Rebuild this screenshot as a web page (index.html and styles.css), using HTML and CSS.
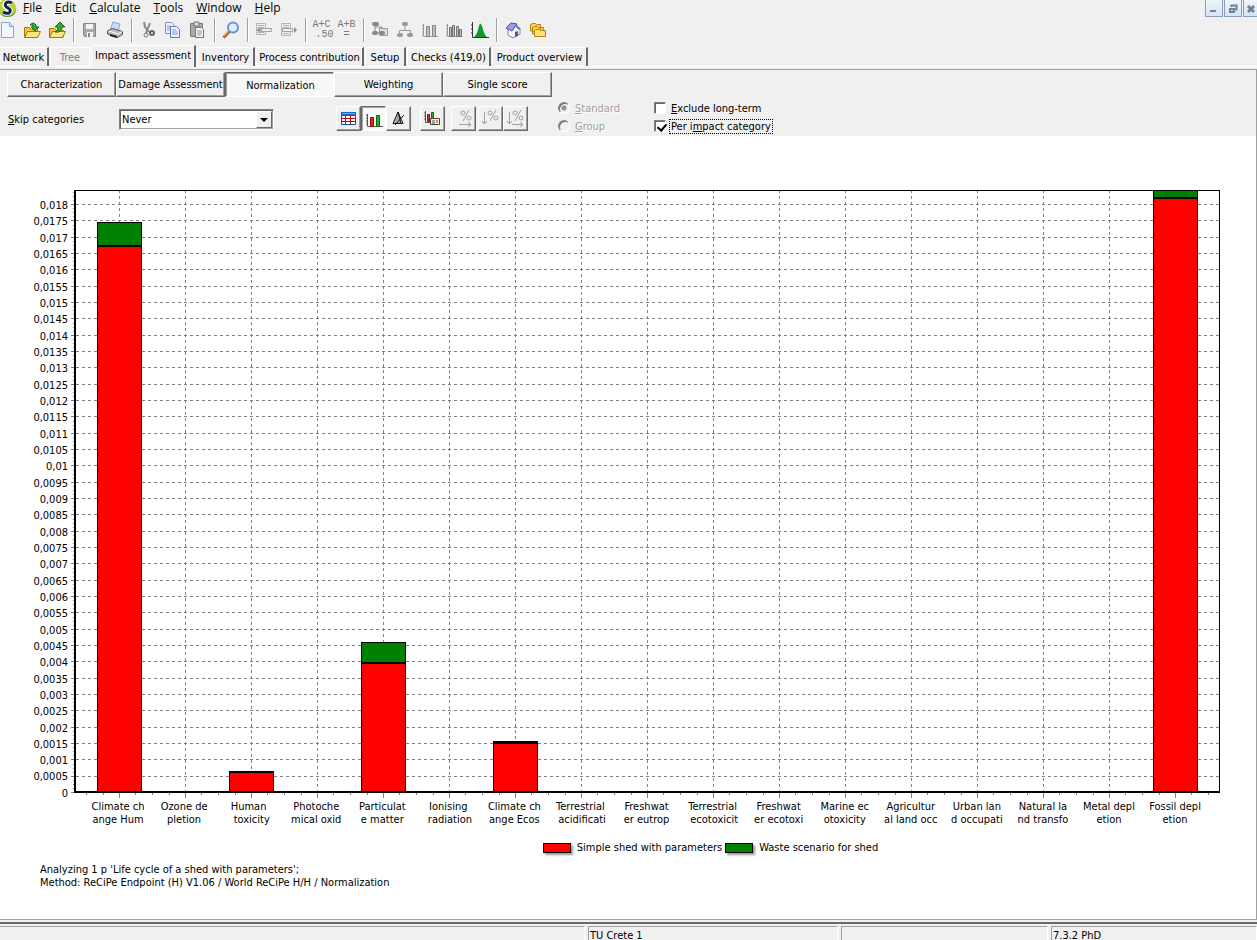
FILE: index.html
```html
<!DOCTYPE html>
<html lang="en">
<head>
  <meta charset="UTF-8">
  <meta name="viewport" content="width=device-width, initial-scale=1.0">
  <title>Impact assessment</title>
  <link rel="stylesheet" href="styles.css">
</head>
<body>
  <header class="menu-bar">
    <svg class="logo" width="17" height="17" viewBox="0 0 17 17">
      <circle cx="7" cy="8" r="9" fill="#b7d433"/>
      <path d="M0 13Q5 17 13 14Q16 11 16 7Q17 17 7 17Q2 17 0 13Z" fill="#5da52c"/>
      <path d="M12 3Q8 1 6 3Q3 6 7 8Q12 10 9 13Q6 14 3 12" fill="none" stroke="#fff" stroke-width="5"/>
      <path d="M12 3Q8 1 6 3Q4 6 8 8Q12 10 9 13Q6 14 3 12" fill="none" stroke="#14234f" stroke-width="3"/>
    </svg>
    <nav class="menu">
      <a href="#"><u>F</u>ile</a>
      <a href="#"><u>E</u>dit</a>
      <a href="#"><u>C</u>alculate</a>
      <a href="#"><u>T</u>ools</a>
      <a href="#"><u>W</u>indow</a>
      <a href="#"><u>H</u>elp</a>
    </nav>
    <div class="window-buttons">
      <button aria-label="Minimize"><svg width="16" height="15"><path d="M4 9h6v2H4z" fill="#71839b"/></svg></button>
      <button aria-label="Restore"><svg width="16" height="15"><path d="M6.5 6V4.5h5v4H10" fill="none" stroke="#71839b" stroke-width="2"/><path d="M5 8h4v3H5z" fill="none" stroke="#71839b" stroke-width="2"/></svg></button>
      <button aria-label="Close"><svg width="16" height="15"><path d="M4 5l6 6M10 5l-6 6" fill="none" stroke="#71839b" stroke-width="3"/></svg></button>
    </div>
  </header>

  <div class="toolbar">
    <div class="tool-group first">
      <button aria-label="New"><svg width="18" height="18"><path d="M3.5 1.5h8l4 4v11h-12z" fill="#f2f6ff" stroke="#8fa3cf"/><path d="M11.5 1.5v4h4" fill="#cddcf8" stroke="#8fa3cf"/></svg></button>
      <button aria-label="Open"><svg width="18" height="18"><path d="M1.5 16V6.5h5l2 2h6V16z" fill="#f3c53a" stroke="#a87608"/><path d="M1.5 16.5l3-6h13l-3 6z" fill="#ffe680" stroke="#a87608"/><path d="M7 4Q10 0 13 4V6h3l-4 4-4-4h2Q10 3 7 4z" fill="#36a832" stroke="#157019"/></svg></button>
      <button aria-label="Save project"><svg width="18" height="18"><path d="M1.5 16V7.5h5l2 2h7V16z" fill="#f3c53a" stroke="#a87608"/><path d="M1.5 16.5l3-6h13l-3 6z" fill="#ffe680" stroke="#a87608"/><path d="M7 11Q10 10 10 6H7l5-5 5 5h-3Q14 12 7 11z" fill="#36a832" stroke="#157019"/></svg></button>
    </div>
    <div class="tool-group">
      <button aria-label="Save"><svg width="18" height="18"><path d="M2.5 2.5h12v13h-11l-1-1z" fill="#aaa" stroke="#888"/><path d="M5 3h7v5H5zM6 11h6v5H6z" fill="#f4f4f4"/><path d="M7 12h2v4H7z" fill="#888"/></svg></button>
      <button aria-label="Print"><svg width="18" height="18"><path d="M4 9L7 1l7 2-2 7z" fill="#c9ddfa" stroke="#8aa0cc"/><path d="M1.5 10l5-2.5 10 3v3l-5 3-10-3.5z" fill="#bbb" stroke="#555"/><path d="M3 10l9 3 4-2.5" fill="none" stroke="#fff"/><path d="M4 14l7 2" stroke="#222" stroke-width="2"/></svg></button>
    </div>
    <div class="tool-group">
      <button aria-label="Cut"><svg width="18" height="18"><path d="M5 1l1 5 4 5M11 2l-2 5-2 5" fill="none" stroke="#888" stroke-width="2"/><circle cx="7" cy="14" r="2" fill="none" stroke="#777"/><circle cx="13" cy="12" r="2" fill="none" stroke="#666" stroke-width="2"/></svg></button>
      <button aria-label="Copy"><svg width="18" height="18"><path d="M1.5 1.5h6l3 3v8h-9z" fill="#eef3ff" stroke="#7d8fc9"/><path d="M6.5 5.5h6l3 3v8h-9z" fill="#eef3ff" stroke="#6376b8"/><path d="M3 5h4M3 7h3M3 9h3M8 9h4M8 11h6M8 13h6" stroke="#8296cf"/></svg></button>
      <button aria-label="Paste"><svg width="18" height="18"><path d="M1.5 2.5h12v13h-12z" fill="#aaa" stroke="#777"/><path d="M5 1h5v4H5z" fill="#ddd" stroke="#777"/><path d="M6.5 6.5h6l2 2v8h-8z" fill="#f4f4f4" stroke="#777"/><path d="M8 10h5M8 12h5M8 14h4" stroke="#999"/></svg></button>
    </div>
    <div class="tool-group">
      <button aria-label="Find"><svg width="18" height="18"><path d="M1.5 16.5l6-6" stroke="#b5611c" stroke-width="3"/><path d="M2 15l5-5" stroke="#f6b15c"/><circle cx="11" cy="6.5" r="5" fill="#d8efff" stroke="#6d8fd0" stroke-width="2"/></svg></button>
    </div>
    <div class="tool-group disabled">
      <button aria-label="Indent left"><svg width="18" height="18"><path d="M1.5 2.5h9v11h-9z" fill="#eee" stroke="#b4b4b4"/><path d="M3 4.5h6M3 6.5h6M3 11.5h6" stroke="#b4b4b4"/><path d="M6.5 7.5h10v3h-10z" fill="#eee" stroke="#a4a4a4"/><path d="M5 6.5L2 9l3 2.5zM2 9h5" stroke="#999" fill="#999"/></svg></button>
      <button aria-label="Indent right"><svg width="18" height="18"><path d="M1.5 2.5h9v12h-9z" fill="#eee" stroke="#b4b4b4"/><path d="M3 4.5h6M3 6.5h6M3 12.5h6" stroke="#b4b4b4"/><path d="M2.5 7.5h10v3h-10z" fill="#eee" stroke="#a4a4a4"/><path d="M14 6l3 3-3 3z" fill="#888"/></svg></button>
    </div>
    <div class="tool-group disabled">
      <button class="calc">A+C<br>&nbsp;.50</button>
      <button class="calc">A+B<br>=</button>
    </div>
    <div class="tool-group disabled">
      <button aria-label="Network"><svg width="18" height="18"><path d="M4 4v8h5M4 6h7v6" fill="none" stroke="#888"/><path d="M8.5 7.5h8v7h-8z" fill="#ddd" stroke="#999"/><rect x="1" y="1" width="7" height="4" rx="2" fill="#888"/><rect x="1" y="10" width="6" height="4" rx="2" fill="#888"/><rect x="8" y="10" width="6" height="4" rx="2" fill="#888"/></svg></button>
      <button aria-label="Tree"><svg width="18" height="18"><path d="M9 4v5M3.5 13V9.5h11V13" fill="none" stroke="#999"/><rect x="6" y="1" width="6" height="4" rx="2" fill="#999"/><rect x="1" y="12" width="6" height="4" rx="2" fill="#999"/><rect x="11" y="12" width="6" height="4" rx="2" fill="#999"/></svg></button>
      <button aria-label="Analyze"><svg width="18" height="18"><path d="M2.5 3v12.5H17M1 5h2M1 8h2M1 11h2M1 14h2" stroke="#999" fill="none"/><path d="M5.5 5.5h3v10h-3zM11.5 4.5h3v11h-3z" fill="#bbb" stroke="#888"/></svg></button>
      <button aria-label="Compare"><svg width="18" height="18"><path d="M1.5 3v12.5h15M0 5h2M0 8h2M0 11h2M0 14h2" stroke="#999" fill="none"/><path d="M3.5 6.5h2v9h-2zM6.5 4.5h2v11h-2zM10.5 5.5h2v10h-2zM13.5 8.5h2v7h-2z" fill="#bbb" stroke="#777"/></svg></button>
      <button aria-label="Uncertainty"><svg width="18" height="18"><path d="M1.5 1v15.500H18M0 4h2M0 8h2M0 12h2" stroke="#333" fill="none"/><path d="M3 16Q6 14 8 5Q9 0 11 5Q13 14 16 16z" fill="#0b9b2b"/></svg></button>
    </div>
    <div class="tool-group">
      <button aria-label="Home"><svg width="18" height="18"><path d="M4 8v6l5 3 7-4V8l-4-4z" fill="#f3f5fb" stroke="#7d86a8"/><path d="M2 7l5-5 6 1-5 7z" fill="#9a9be6" stroke="#4a51a0"/><path d="M12 3l5 5-2 1-4-4" fill="#7176bd"/><path d="M11 11l3-1v5l-3 1z" fill="#50587e"/></svg></button>
      <button aria-label="Folders"><svg width="18" height="18"><path d="M1.500 10V3.500l2-1h3l1 1h4V10zM3.500 13V6.500l2-1h3l1 1h5V13z" fill="#f7ce45" stroke="#b98410"/><path d="M5.500 15.500v-6l1-1h4l1 1h5v6z" fill="#fde07a" stroke="#b98410"/></svg></button>
    </div>
  </div>

  <nav class="tabs">
    <a href="#" class="tab network">Network</a>
    <a href="#" class="tab tree">Tree</a>
    <a href="#" class="tab impact selected">Impact assessment</a>
    <a href="#" class="tab inventory">Inventory</a>
    <a href="#" class="tab process">Process contribution</a>
    <a href="#" class="tab setup">Setup</a>
    <a href="#" class="tab checks">Checks (419,0)</a>
    <a href="#" class="tab product">Product overview</a>
  </nav>

  <main class="panel">
    <div class="step-buttons">
      <button>Characterization</button>
      <button>Damage Assessment</button>
      <button class="pressed">Normalization</button>
      <button>Weighting</button>
      <button>Single score</button>
    </div>

    <div class="options">
      <label class="skip-label" for="skip"><u>S</u>kip categories</label>
      <div class="combo">
        <select id="skip">
          <option>Never</option>
        </select>
        <span class="combo-arrow"></span>
      </div>
      <div class="view-buttons">
        <div class="view-group">
          <button aria-label="Table"><svg width="17" height="17"><path d="M1 2h15v13H1z" fill="#fff"/><path d="M1 8.500h15M1 11.500h15M5.500 5v10M10.500 5v10" stroke="#d00000"/><path d="M1.500 3v11.500h14V3" fill="none" stroke="#17479e"/><path d="M1 2h15v4H1z" fill="#1464c8"/><path d="M2 3h13v1H2z" fill="#6bb2f5"/></svg></button>
          <button class="pressed" aria-label="Chart"><svg width="17" height="17"><path d="M1.500 3v12.500H17M0 4h2M0 7h2M0 10h2M0 13h2" stroke="#555" fill="none"/><path d="M4.500 6.500h3v9h-3z" fill="#e02a10" stroke="#8e1408"/><path d="M10.500 4.500h3v11h-3z" fill="#2cae28" stroke="#0c6a12"/></svg></button>
          <button aria-label="Uncertainty"><svg width="17" height="17"><path d="M3 13.500L8 2l3 11.500z" fill="#aaa" stroke="#111"/><path d="M5 15l9-10M8 2l5 11.500H3" fill="none" stroke="#111"/></svg></button>
        </div>
        <div class="view-group">
          <button aria-label="Chart options"><svg width="17" height="17"><path d="M1.500 1v11.500H7M0 3h2M0 6h2M0 9h2" stroke="#555" fill="none"/><path d="M3.500 4.500h2v7h-2z" fill="#d82a1c" stroke="#8e1408"/><path d="M7.500 2.500h2v8h-2z" fill="#2cae28" stroke="#0c6a12"/><path d="M6.500 8.500h9v6h-9z" fill="#eee" stroke="#444"/><path d="M8 11h3M8 13h3" stroke="#555"/><path d="M12 10h2v3h-2z" fill="#e88a20"/></svg></button>
        </div>
        <div class="view-group percent">
          <button disabled aria-label="Percent of row"><svg width="21" height="21"><circle cx="10" cy="5" r="2"/><circle cx="16" cy="10" r="2"/><path d="M16 2l-6 11M6 16.5h12M15 14l3 2.500-3 2.500"/></svg></button>
          <button disabled aria-label="Percent of column"><svg width="21" height="21"><circle cx="10" cy="5" r="2"/><circle cx="16" cy="10" r="2"/><path d="M16 2l-6 11M4.500 4v12M2 13l2.500 3 2.500-3"/></svg></button>
          <button disabled aria-label="Percent of total"><svg width="21" height="21"><circle cx="10" cy="5" r="2"/><circle cx="16" cy="10" r="2"/><path d="M16 2l-6 11M4.500 4v12M2 13l2.500 3 2.500-3M7 16.500h11M15 14l3 2.500-3 2.500"/></svg></button>
        </div>
      </div>
      <div class="choices radios">
        <label><input type="radio" name="mode" disabled checked><span><u>S</u>tandard</span></label>
        <label><input type="radio" name="mode" disabled><span><u>G</u>roup</span></label>
      </div>
      <div class="choices checks-list">
        <label><input type="checkbox"><span><u>E</u>xclude long-term</span></label>
        <label><input type="checkbox" checked><span class="focused">Per i<u>m</u>pact category</span></label>
      </div>
    </div>

    <section class="chart">
      <div class="chart-body">
        <div class="y-labels" id="y-labels"></div>
        <div class="plot-side">
          <svg class="plot" id="plot"></svg>
          <div class="x-labels" id="x-labels"></div>
        </div>
      </div>
      <div class="legend">
        <span class="swatch red"></span><span class="legend-text">Simple shed with parameters</span>
        <span class="swatch green"></span><span class="legend-text">Waste scenario for shed</span>
      </div>
      <p class="notes">Analyzing 1 p 'Life cycle of a shed with parameters';<br>Method: ReCiPe Endpoint (H) V1.06 / World ReCiPe H/H / Normalization</p>
    </section>
  </main>

  <footer class="status-bar">
    <span class="status s1"></span>
    <span class="status s2">TU Crete 1</span>
    <span class="status s3"></span>
    <span class="status s4">7.3.2 PhD</span>
  </footer>

  <script src="chart.js"></script>
</body>
</html>
```
FILE: styles.css
```css
*{
  box-sizing: border-box;
}
body{
  margin: 0;
  min-height: 100vh;
  display: flex;
  flex-direction: column;
  overflow: hidden;
  background: #f0f0f0;
  color: #000;
  font: 11px/13px "DejaVu Sans Condensed", "DejaVu Sans", sans-serif;
}
button, select{
  font: inherit;
  color: inherit;
  padding: 0;
}
a{
  color: inherit;
  text-decoration: none;
}
svg{
  display: block;
}

/* menu */
.menu-bar{
  display: flex;
  height: 17px;
}
.menu{
  flex: 1;
  display: flex;
  gap: 13px;
  padding-left: 6px;
  font: 12px/16px "Open Sans", "Noto Sans", sans-serif;
}
.window-buttons{
  display: flex;
  gap: 1px;
  margin-right: -4px;
}
.window-buttons button{
  width: 18px;
  height: 17px;
  border: 1px solid #8c9db5;
  border-top: 0;
  background: linear-gradient(#eef5fd, #d5e4f4);
}

/* toolbar */
.toolbar{
  display: flex;
  height: 24px;
  margin: 1px 0 2px;
}
.tool-group{
  display: flex;
  align-items: center;
  padding: 0 4px 0 3px;
  border-right: 1px solid #a0a0a0;
  box-shadow: 1px 0 #fff;
}
.tool-group:last-child{
  border: 0;
  box-shadow: none;
}
.tool-group.first{
  padding-left: 0;
  margin-left: -6px;
}
.toolbar button{
  width: 25px;
  height: 24px;
  border: 0;
  background: none;
  display: flex;
  align-items: center;
  justify-content: center;
}
.toolbar .calc{
  color: #777;
  font: 10px/10px "Liberation Mono", monospace;
}

/* tabs */
.tabs{
  display: flex;
  align-items: flex-end;
  height: 23px;
  border-bottom: 1px solid #fff;
}
.tab{
  height: 19px;
  margin-right: 1px;
  border: 1px solid #fff;
  border-bottom: 0;
  border-right: 2px solid #696969;
  line-height: 19px;
  text-align: center;
  white-space: nowrap;
}
.tab.selected{
  height: 22px;
  margin-bottom: -1px;
  background: #f0f0f0;
  line-height: 20px;
}
.network{
  width: 49px;
  border-left: 0;
}
.tree{
  width: 40px;
  color: #808080;
  border-right: 1px solid #fff;
}
.impact{
  width: 105px;
}
.inventory{
  width: 58px;
}
.process{
  width: 108px;
}
.setup{
  width: 41px;
}
.checks{
  width: 84px;
}
.product{
  width: 96px;
}

/* main panel */
.panel{
  flex: 1;
  margin-top: 2px;
  border-top: 1px solid #a0a0a0;
  border-right: 1px solid #a0a0a0;
  display: flex;
  flex-direction: column;
}
.step-buttons{
  display: flex;
  padding: 2px 0 0 7px;
}
.step-buttons button{
  width: 109px;
  height: 25px;
}
.step-buttons button,
.view-buttons button{
  border: 1px solid;
  border-color: #fff #696969 #696969 #fff;
  border-radius: 0;
  background: #f0f0f0;
  box-shadow: inset -1px -1px #a0a0a0;
}
.step-buttons .pressed,
.view-buttons .pressed{
  border-color: #696969 #fff #fff #696969;
  background: #f8f8f8;
  box-shadow: inset 1px 1px #a0a0a0;
  padding: 2px 0 0 2px;
}
.options{
  display: flex;
  height: 39px;
  padding-left: 8px;
}
.skip-label{
  width: 111px;
  padding-top: 16px;
}
.combo{
  position: relative;
  width: 155px;
  height: 21px;
  margin-top: 12px;
}
.combo select{
  width: 100%;
  height: 21px;
  padding-left: 2px;
  appearance: none;
  border: 1px solid;
  border-color: #808080 #fff #fff #808080;
  border-radius: 0;
  outline: 0;
  background: #fff;
  box-shadow: inset 1px 1px #696969, inset -1px -1px #a0a0a0;
}
/* drop-down arrow on top of the select */
.combo-arrow{
  position: absolute;
  top: 2px;
  right: 2px;
  width: 16px;
  height: 17px;
  border: 1px solid;
  border-color: #fff #696969 #696969 #fff;
  background: #f0f0f0;
  pointer-events: none;
}
.combo-arrow::after{
  content: "";
  position: absolute;
  left: 3px;
  top: 6px;
  border: 4px solid transparent;
  border-top-color: #000;
  border-bottom: 0;
}
.view-buttons{
  display: flex;
  width: 222px;
  margin: 9px 0 0 62px;
  gap: 9px;
}
.view-group{
  display: flex;
}
.view-group.percent{
  margin-left: -3px;
}
.view-buttons button{
  width: 25px;
  height: 25px;
  display: flex;
  align-items: center;
  justify-content: center;
}
.percent button:first-child{
  margin-right: 2px;
}
.percent svg{
  fill: none;
  stroke: #a0a0a0;
}
.choices{
  display: flex;
  flex-direction: column;
  padding-top: 2px;
}
.radios{
  width: 96px;
  color: #a0a0a0;
  text-shadow: 1px 1px #fff;
}
.choices label{
  display: flex;
  align-items: center;
  gap: 4px;
  height: 18px;
  white-space: nowrap;
}
.choices input{
  appearance: none;
  position: relative;
  flex: none;
  width: 12px;
  height: 12px;
  margin: 0;
  border: 1px solid;
  border-color: #808080 #fff #fff #808080;
  background: #fff;
  box-shadow: inset 1px 1px #696969;
}
.choices .radios input,
.radios input{
  border-radius: 50%;
  background: #f0f0f0;
}
.radios input:checked{
  background: radial-gradient(circle, #909090 2px, #f0f0f0 3px);
}
/* tick drawn over the box */
.checks-list input:checked::after{
  content: "";
  position: absolute;
  left: 4px;
  top: 1px;
  width: 4px;
  height: 7px;
  border: solid #000;
  border-width: 0 2px 2px 0;
  transform: rotate(40deg);
}
.choices span{
  padding: 0 1px;
}
.focused{
  outline: 1px dotted #000;
}

/* chart */
.chart{
  flex: 1;
  padding: 54px 36px 0 0;
  background: #fff;
  border-bottom: 1px solid #a0a0a0;
}
.chart-body{
  display: flex;
}
.y-labels{
  width: 68px;
  height: 604px;
  margin: 8px 3px 0 0;
  display: flex;
  flex-direction: column;
  justify-content: space-between;
  line-height: 16px;
  text-align: right;
}
.plot-side{
  flex: 1;
}
.plot{
  width: 100%;
  height: 608px;
  overflow: visible;
  shape-rendering: crispEdges;
}
.x-labels{
  display: flex;
  padding: 2px 12px 0 14px;
}
.x-labels span{
  flex: 1 1 0;
  white-space: pre;
  text-align: center;
}
.legend{
  display: flex;
  align-items: center;
  justify-content: center;
  margin: 15px 0 0 204px;
  height: 13px;
}
.swatch{
  width: 28px;
  height: 10px;
  border: 1px solid #000;
  box-shadow: 2px 2px 2px #999;
}
.red{
  background: #f00;
}
.green{
  background: #008000;
}
.legend-text{
  margin: 0 3px 0 6px;
}
.notes{
  margin: 9px 0 0 40px;
}

/* status bar */
.status-bar{
  display: flex;
  gap: 3px;
  height: 18px;
  margin-top: 2px;
  padding-top: 2px;
  border-top: 2px solid #696969;
}
.status{
  border: 1px solid;
  border-color: #a0a0a0 #fff #fff #a0a0a0;
  border-bottom: 0;
  line-height: 17px;
  padding-left: 1px;
}
.s1{
  width: 585px;
  border-left: 0;
}
.s2{
  width: 250px;
}
.s3{
  width: 207px;
}
.s4{
  flex: 1;
}
```
FILE: chart.js
```js
var categories = [
  ['Climate ch', 'ange Hum'],
  ['Ozone de', 'pletion'],
  ['Human ', ' toxicity'],
  ['Photoche', 'mical oxid'],
  ['Particulat', 'e matter'],
  ['Ionising', ' radiation'],
  ['Climate ch', 'ange Ecos'],
  ['Terrestrial', ' acidificati'],
  ['Freshwat', 'er eutrop'],
  ['Terrestrial', ' ecotoxicit'],
  ['Freshwat', 'er ecotoxi'],
  ['Marine ec', 'otoxicity'],
  ['Agricultur', 'al land occ'],
  ['Urban lan', 'd occupati'],
  ['Natural la', 'nd transfo'],
  ['Metal depl', 'etion'],
  ['Fossil depl', 'etion']
]
// category index, shed, waste scenario
var bars = [
  [0, 0.01674, 0.00072],
  [2, 0.00063, 0.00001],
  [4, 0.00397, 0.00062],
  [6, 0.00152, 0.00004],
  [16, 0.01821, 0.00025]
]
var yMax = 0.018
var yStep = 0.0005
var zeroY = 602
var plot = document.getElementById('plot')

function toY(value){
  return Math.max(0, Math.round(zeroY - value * 588 / yMax))
}

function add(name, attrs){
  var el = document.createElementNS('http://www.w3.org/2000/svg', name)
  for(var key in attrs){
    el.setAttribute(key, attrs[key])
  }
  plot.appendChild(el)
}

function line(x1, y1, x2, y2, dash){
  add('line', { x1: x1, y1: y1, x2: x2, y2: y2, stroke: '#808080', 'stroke-dasharray': dash ? '3 3' : 'none' })
}

function box(x, y, w, h, fill){
  add('rect', { x: x, y: y, width: w, height: h, fill: fill })
}

function drawPlot(){
  var width = plot.getBoundingClientRect().width
  var step = (width - 27) / 17
  var i, x, y
  plot.innerHTML = ''

  // horizontal grid and left ticks, the svg starts 3px left of the axis
  for(i = 0; i <= 36; i++){
    y = toY(i * yStep) + 0.5
    if(i > 0) line(5, y, width, y, true)
    line(0, y, 3, y)
    for(var k = 1; k < 4; k++){
      var minor = Math.round(y - k * 4.08) + 0.5
      if(minor > 0) line(2, minor, 3, minor)
    }
  }
  // vertical grid and bottom ticks
  for(i = 0; i < 17; i++){
    x = Math.round(15 + step * (i + 0.5)) + 0.5
    line(x, 0, x, zeroY, true)
    line(x, 603, x, 608)
    line(x - 33, 603, x - 33, 605)
    line(x - 16, 603, x - 16, 605)
    line(x + 16, 603, x + 16, 605)
  }
  line(x + 33, 603, x + 33, 605)

  bars.forEach(function(bar){
    var left = Math.round(15 + step * (bar[0] + 0.5)) - 22
    var top = toY(bar[1] + bar[2])
    var middle = toY(bar[1])
    box(left, top, 45, zeroY - top, '#000')
    box(left + 1, top + 1, 43, Math.max(0, middle - top - 1), '#008000')
    box(left + 1, middle + 2, 43, zeroY - middle - 2, '#f00')
  })

  // frame
  box(3, 0, width - 3, 1, '#000')
  box(width - 1, 0, 1, 603, '#000')
  box(3, 0, 2, 603, '#000')
  box(3, 601, width - 3, 2, '#000')
}

for(var n = 36; n >= 0; n--){
  var label = document.createElement('span')
  label.textContent = String(Math.round(n * 5) / 10000).replace('.', ',')
  document.getElementById('y-labels').appendChild(label)
}
categories.forEach(function(lines){
  var cell = document.createElement('span')
  cell.textContent = lines.join('\n')
  document.getElementById('x-labels').appendChild(cell)
})

drawPlot()
window.addEventListener('resize', drawPlot)
```
